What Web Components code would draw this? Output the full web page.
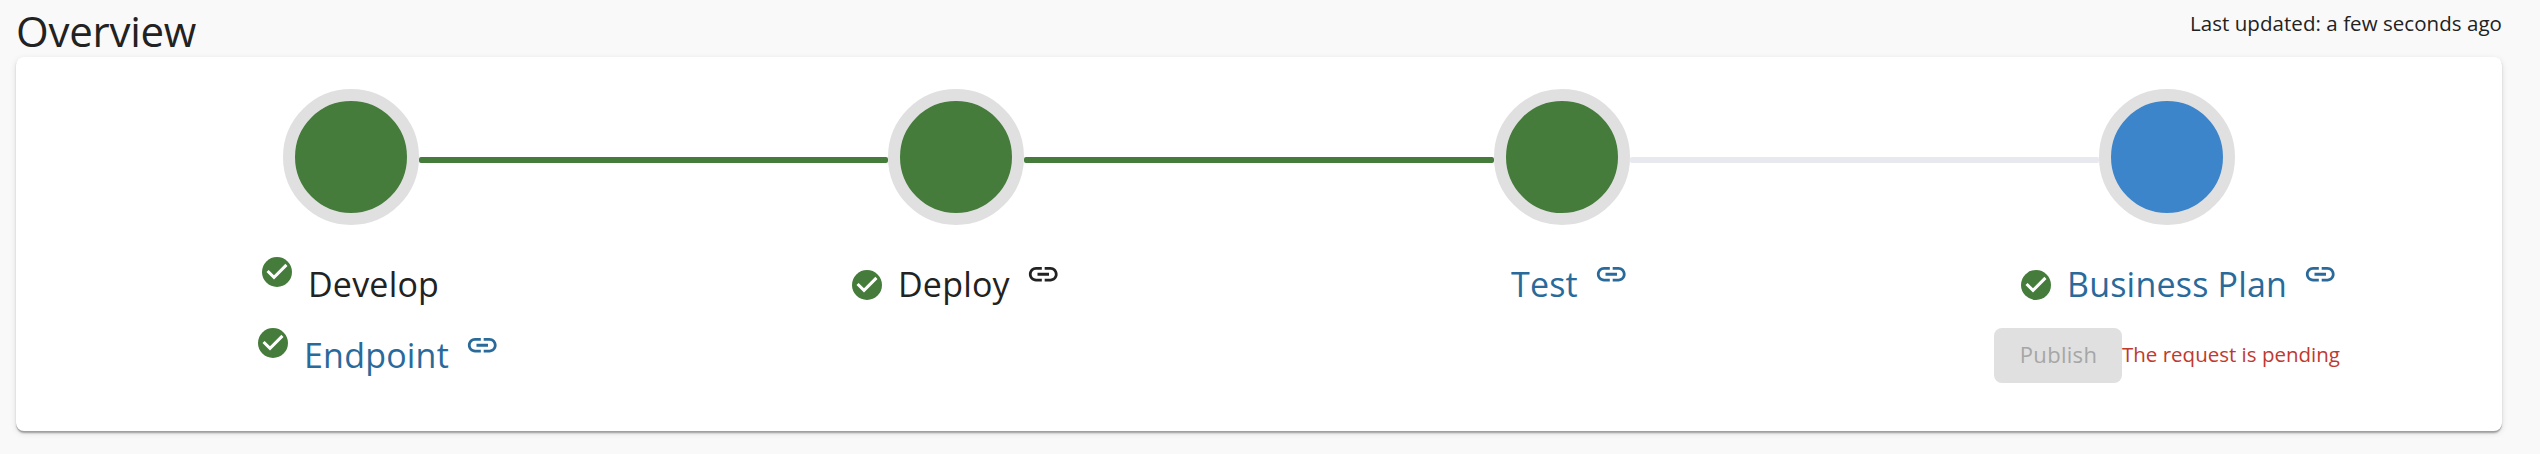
<!DOCTYPE html>
<html lang="en">
<head>
<meta charset="utf-8">
<title>Overview</title>
<style>
body { margin: 0; min-height: 454px; background: #f9f9f9; color: #222; font-family: "Open Sans", sans-serif; }
</style>
</head>
<body>
<api-overview>
  <span slot="title">Overview</span>
  <span slot="updated">Last updated: a few seconds ago</span>
  <flow-step line="done">
    <step-label check style="--x:211px;--check-y:-3px">Develop</step-label>
    <step-label check link style="--x:207px;--check-y:-3px;--tone:#296a9b">Endpoint</step-label>
  </flow-step>
  <flow-step line="done">
    <step-label check link style="--x:195.5px">Deploy</step-label>
  </flow-step>
  <flow-step line="idle">
    <step-label link style="--x:252px;--tone:#296a9b">Test</step-label>
  </flow-step>
  <flow-step current>
    <step-label check link style="--x:153.5px;--tone:#296a9b">Business Plan</step-label>
    <publish-action><span slot="note">The request is pending</span>Publish</publish-action>
  </flow-step>
</api-overview>
<script>
const define = (name, html) => customElements.define(name, class extends HTMLElement {
  constructor() {
    super();
    this.attachShadow({ mode: 'open' }).innerHTML = html;
  }
});

define('api-overview', `
<style>
:host { display: block; padding: 0 38px 20px 16px; }
header { display: flex; justify-content: space-between; height: 57px; white-space: nowrap; }
.title { font-size: 42px; line-height: 56px; padding-top: 3px; letter-spacing: -.25px; }
.updated { font-size: 20.5px; line-height: 30px; padding-top: 8px; letter-spacing: .05px; }
.card { display: grid; grid-template-columns: repeat(4, 1fr); box-sizing: border-box; height: 374px; padding: 32px 32px 0; background: #fff; border-radius: 8px;
  box-shadow: 0 1px 0 #a0a0a0, 0 4px 2px -2px rgba(0,0,0,.2), 0 2px 2px rgba(0,0,0,.14), 0 2px 6px rgba(0,0,0,.12); }
</style>
<header><div class="title"><slot name="title"></slot></div><div class="updated"><slot name="updated"></slot></div></header>
<div class="card"><slot></slot></div>`);

define('flow-step', `
<style>
:host { display: block; min-width: 0; --fill: #457c3b; }
:host([current]) { --fill: #3d85cb; }
.track { display: grid; grid-template-columns: minmax(0, 1fr) 136px minmax(0, 1fr); height: 136px; margin-bottom: 32px; }
.dot { grid-column: 2; box-sizing: border-box; border: 12px solid #e0e0e0; border-radius: 50%; background: var(--fill); }
.line { display: none; height: 6px; margin-top: 68px; border-radius: 2px; width: 469.5px; }
:host([line]) .line { display: block; }
:host([line=done]) .line { background: #457c3b; }
:host([line=idle]) .line { background: #e8e8ef; }
</style>
<div class="track"><div class="dot"></div><div class="line"></div></div>
<slot></slot>`);

define('step-label', `
<style>
:host { display: flex; align-items: flex-start; height: 54px; margin-bottom: 17px; padding-left: var(--x); color: var(--tone, #222);
  font-size: 34px; line-height: 54px; letter-spacing: .2px; white-space: nowrap; }
svg { display: none; flex: none; fill: currentColor; }
.check { width: 36px; height: 36px; margin: var(--check-y, 10px) 13px 0 0; color: #457c3b; }
.link { width: 34.5px; height: 34.5px; margin-left: 16.2px; }
:host([check]) .check, :host([link]) .link { display: block; }
</style>
<svg class="check" viewBox="0 0 24 24"><circle cx="12" cy="12" r="10"/><path fill="#fff" d="M10 17l-5-5 1.410-1.410L10 14.170l7.590-7.590L19 8z"/></svg>
<span><slot></slot></span>
<svg class="link" viewBox="0 0 24 24"><path d="M3.900 12c0-1.710 1.390-3.100 3.100-3.100h4V7H7c-2.760 0-5 2.240-5 5s2.240 5 5 5h4v-1.900H7c-1.710 0-3.100-1.390-3.100-3.100zM8 13h8v-2H8v2zm9-6h-4v1.900h4c1.710 0 3.100 1.390 3.100 3.100s-1.390 3.100-3.100 3.100h-4V17h4c2.760 0 5-2.240 5-5s-2.240-5-5-5z"/></svg>`);

define('publish-action', `
<style>
:host { display: flex; align-items: center; height: 55px; padding-left: 129.5px; font-size: 20.5px; white-space: nowrap; }
button { box-sizing: border-box; width: 128px; height: 55px; padding: 0 0 3px 1px; border: 0; border-radius: 8px; background: #e0e0e0; color: #a6a6a6; font: inherit; font-size: 22px; letter-spacing: .3px; }
.note { color: #c0392f; line-height: 30px; padding-bottom: 3px; }
</style>
<button disabled><slot></slot></button><div class="note"><slot name="note"></slot></div>`);
</script>
</body>
</html>
